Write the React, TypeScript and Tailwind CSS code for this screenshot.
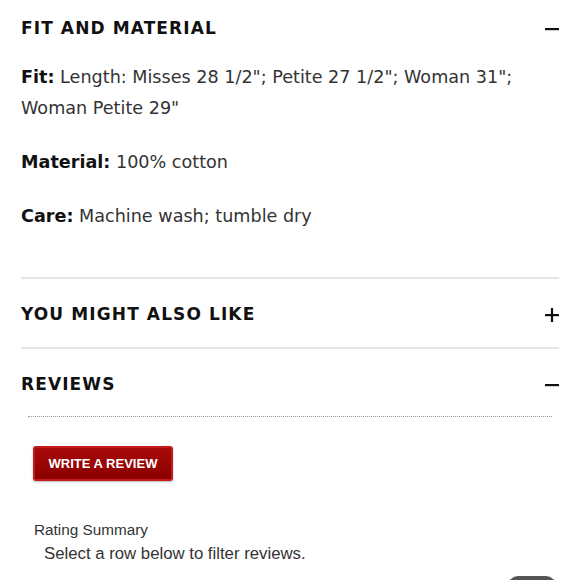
import React from "react";

const head = "font-['DejaVu_Sans',sans-serif] font-bold text-[17px] tracking-[0.065em] text-[#111]";
const body = "font-['DejaVu_Sans',sans-serif] text-[17.6px] leading-[31px] text-[#333]";

function Minus() {
  return (
    <svg width="14" height="14" viewBox="0 0 14 14" className="text-[#111]">
      <rect x="0" y="6" width="14" height="2.2" fill="currentColor" />
    </svg>
  );
}
function Plus() {
  return (
    <svg width="14" height="14" viewBox="0 0 14 14" className="text-[#111]">
      <rect x="0" y="6" width="14" height="2.2" fill="currentColor" />
      <rect x="5.9" y="0" width="2.2" height="14" fill="currentColor" />
    </svg>
  );
}

export default function App() {
  return (
    <div className="w-[580px] h-[580px] overflow-hidden bg-white relative">
      <div className="px-[21px]">
        <div className="flex items-center justify-between pt-[17px] h-[40px]">
          <span className={head}>FIT AND MATERIAL</span>
          <Minus />
        </div>
        <div className="pt-[22px]">
          <p className={body}>
            <b className="text-[#111]">Fit:</b> Length: Misses 28 1/2"; Petite 27 1/2"; Woman 31"; Woman Petite 29"
          </p>
          <p className={body + " mt-[23px]"}>
            <b className="text-[#111]">Material:</b> 100% cotton
          </p>
          <p className={body + " mt-[23px]"}>
            <b className="text-[#111]">Care:</b> Machine wash; tumble dry
          </p>
        </div>
        <div className="mt-[45px] h-[2px] bg-[#e6e6e6]" />
        <div className="flex items-center justify-between h-[68px] pt-[4px]">
          <span className={head}>YOU MIGHT ALSO LIKE</span>
          <Plus />
        </div>
        <div className="h-[2px] bg-[#e6e6e6]" />
        <div className="flex items-center justify-between h-[67px] pt-[4px]">
          <span className={head}>REVIEWS</span>
          <Minus />
        </div>
        <div className="ml-[7px] mr-[7px] border-t border-dotted border-[#999]" />
        <div className="pl-[12px] pt-[29px]">
          <button className="w-[140px] h-[35px] rounded-[3px] border-[2px] border-[#c41a1a] bg-gradient-to-b from-[#a80a0a] to-[#8a0000] text-white font-['Liberation_Sans',sans-serif] font-bold text-[13px] shadow-[0_1px_2px_rgba(0,0,0,0.3)]">
            WRITE A REVIEW
          </button>
        </div>
        <div className="pl-[13px] pt-[38px] font-['Liberation_Sans',sans-serif] text-[#333]">
          <div className="text-[15.3px] leading-[22px]">Rating Summary</div>
          <div className="pl-[10px] text-[16.75px] leading-[26px]">Select a row below to filter reviews.</div>
        </div>
      </div>
      <div className="absolute left-[508px] top-[576px] w-[48px] h-[20px] rounded-full bg-[#555]" />
    </div>
  );
}
